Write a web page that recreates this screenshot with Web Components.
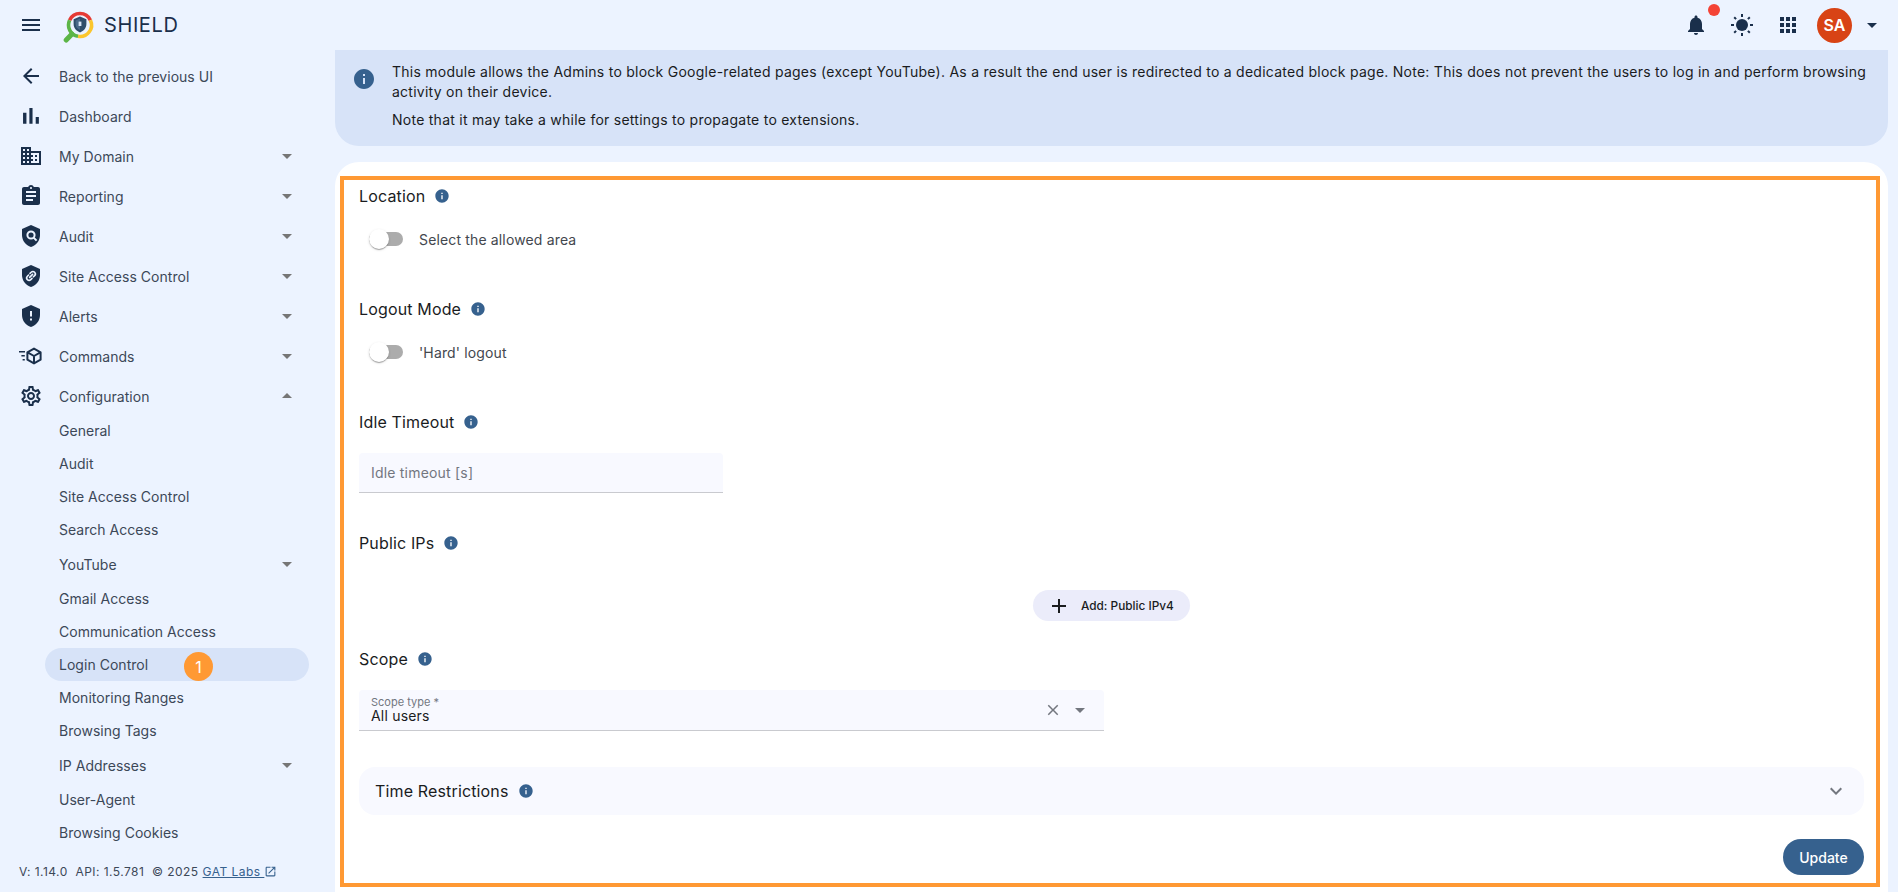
<!DOCTYPE html>
<html lang="en">
<head>
<meta charset="utf-8">
<title>SHIELD</title>
<style>
  html, body { margin: 0; height: 892px; overflow: hidden; background: #ecf3ff; font-family: Inter, "Liberation Sans", sans-serif; }
</style>
</head>
<body>
<app-shell></app-shell>
<script>
const ICONS = {
  menu: '<path d="M3 18h18v-2H3v2zm0-5h18v-2H3v2zm0-7v2h18V6H3z"/>',
  back: '<path d="M20 11H7.83l5.59-5.59L12 4l-8 8 8 8 1.41-1.41L7.83 13H20v-2z"/>',
  bar: '<path d="M5 9.2h3V19H5V9.2zM10.6 5h2.8v14h-2.8V5zm5.6 8H19v6h-2.8v-6z" transform="translate(-1.6 -1.6) scale(1.13)"/>',
  domain: '<path d="M12 7V3H2v18h20V7H12zM6 19H4v-2h2v2zm0-4H4v-2h2v2zm0-4H4V9h2v2zm0-4H4V5h2v2zm4 12H8v-2h2v2zm0-4H8v-2h2v2zm0-4H8V9h2v2zm0-4H8V5h2v2zm10 12h-8v-2h2v-2h-2v-2h2v-2h-2V9h8v10zm-2-8h-2v2h2v-2zm0 4h-2v2h2v-2z"/>',
  report: '<path d="M19 3h-4.18C14.4 1.84 13.3 1 12 1c-1.3 0-2.4.84-2.82 2H5c-1.1 0-2 .9-2 2v14c0 1.1.9 2 2 2h14c1.1 0 2-.9 2-2V5c0-1.1-.9-2-2-2zm-7 0c.55 0 1 .45 1 1s-.45 1-1 1-1-.45-1-1 .45-1 1-1zm2 14H7v-2h7v2zm3-4H7v-2h10v2zm0-4H7V7h10v2z"/>',
  shieldSearch: '<path d="M12 1L3 5v6c0 5.55 3.84 10.74 9 12 5.16-1.26 9-6.45 9-12V5l-9-4z"/><circle cx="12" cy="11" r="3.6" fill="none" stroke="#ecf3ff" stroke-width="2"/><path d="M14.6 13.6l3 3" stroke="#ecf3ff" stroke-width="2"/>',
  shieldLink: '<path d="M12 1L3 5v6c0 5.55 3.84 10.74 9 12 5.16-1.26 9-6.45 9-12V5l-9-4z"/><path d="M10.6 13.4l3-3M11 9.4l1.2-1.2a2.4 2.4 0 0 1 3.4 3.4l-1.2 1.2M13 14.4l-1.2 1.2a2.4 2.4 0 0 1-3.4-3.4l1.2-1.2" fill="none" stroke="#ecf3ff" stroke-width="1.6" stroke-linecap="round"/>',
  shieldAlert: '<path d="M12 1L3 5v6c0 5.55 3.84 10.74 9 12 5.16-1.26 9-6.45 9-12V5l-9-4zm1 15.5h-2v-2h2v2zm0-4h-2V7h2v5.5z"/>',
  commands: '<path d="M0 7h6v1.6H0zM2.4 11h3.4v1.6H2.4zM3.6 15h2.2v1.6H3.6z"/><path d="M15 4.6l6.6 3.7v7.4L15 19.4l-6.6-3.7V8.3zM8.6 8.4L15 12l6.4-3.6M15 12v7.2" fill="none" stroke="currentColor" stroke-width="2" stroke-linejoin="round"/>',
  gear: '<path d="M19.43 12.98c.04-.32.07-.64.07-.98 0-.34-.03-.66-.07-.98l2.11-1.65c.19-.15.24-.42.12-.64l-2-3.46c-.09-.16-.26-.25-.44-.25-.06 0-.12.01-.17.03l-2.49 1c-.52-.4-1.08-.73-1.69-.98l-.38-2.65C14.46 2.18 14.25 2 14 2h-4c-.25 0-.46.18-.49.42l-.38 2.65c-.61.25-1.17.59-1.69.98l-2.49-1c-.06-.02-.12-.03-.18-.03-.17 0-.34.09-.43.25l-2 3.46c-.13.22-.07.49.12.64l2.11 1.65c-.04.32-.07.65-.07.98 0 .33.03.66.07.98l-2.11 1.65c-.19.15-.24.42-.12.64l2 3.46c.09.16.26.25.44.25.06 0 .12-.01.17-.03l2.49-1c.52.4 1.08.73 1.69.98l.38 2.65c.03.24.24.42.49.42h4c.25 0 .46-.18.49-.42l.38-2.65c.61-.25 1.17-.59 1.69-.98l2.49 1c.06.02.12.03.18.03.17 0 .34-.09.43-.25l2-3.46c.12-.22.07-.49-.12-.64l-2.11-1.65zm-1.98-1.71c.04.31.05.52.05.73 0 .21-.02.43-.05.73l-.14 1.13.89.7 1.08.84-.7 1.21-1.27-.51-1.04-.42-.9.68c-.43.32-.84.56-1.25.73l-1.06.43-.16 1.13-.2 1.35h-1.4l-.19-1.35-.16-1.13-1.06-.43c-.43-.18-.83-.41-1.23-.71l-.91-.7-1.06.43-1.27.51-.7-1.21 1.08-.84.89-.7-.14-1.13c-.03-.31-.05-.54-.05-.74s.02-.43.05-.73l.14-1.13-.89-.7-1.08-.84.7-1.21 1.27.51 1.04.42.9-.68c.43-.32.84-.56 1.25-.73l1.06-.43.16-1.13.2-1.35h1.39l.19 1.35.16 1.13 1.06.43c.43.18.83.41 1.23.71l.91.7 1.06-.43 1.27-.51.7 1.21-1.07.85-.89.7.14 1.13zM12 8c-2.21 0-4 1.79-4 4s1.79 4 4 4 4-1.79 4-4-1.79-4-4-4zm0 6c-1.1 0-2-.9-2-2s.9-2 2-2 2 .9 2 2-.9 2-2 2z"/>',
  bell: '<path d="M12 22c1.1 0 2-.9 2-2h-4c0 1.1.89 2 2 2zm6-6v-5c0-3.07-1.64-5.64-4.5-6.32V4c0-.83-.67-1.5-1.5-1.5s-1.5.67-1.5 1.5v.68C7.63 5.36 6 7.92 6 11v5l-2 2v1h16v-1l-2-2z"/>',
  sun: '<circle cx="12" cy="12" r="6"/><path d="M12 1v3M12 20v3M1 12h3M20 12h3M4.2 4.2l1.9 1.9M17.9 17.9l1.9 1.9M4.2 19.8l1.9-1.9M17.9 6.1l1.9-1.9" stroke="currentColor" stroke-width="2"/>',
  apps: '<path d="M4 8h4V4H4v4zm6 12h4v-4h-4v4zm-6 0h4v-4H4v4zm0-6h4v-4H4v4zm6 0h4v-4h-4v4zm6-10v4h4V4h-4zm-6 4h4V4h-4v4zm6 6h4v-4h-4v4zm0 6h4v-4h-4v4z"/>',
  down: '<path d="M7 10l5 5 5-5z"/>',
  up: '<path d="M7 14l5-5 5 5z"/>',
  info: '<path d="M12 2C6.48 2 2 6.48 2 12s4.48 10 10 10 10-4.48 10-10S17.52 2 12 2zm1 15h-2v-6h2v6zm0-8h-2V7h2v2z"/>',
  close: '<path d="M19 6.41L17.59 5 12 10.59 6.41 5 5 6.41 10.59 12 5 17.59 6.41 19 12 13.41 17.59 19 19 17.59 13.41 12z"/>',
  add: '<path d="M19 13h-6v6h-2v-6H5v-2h6V5h2v6h6v2z"/>',
  expand: '<path d="M16.59 8.59L12 13.17 7.41 8.59 6 10l6 6 6-6z"/>',
  external: '<path d="M19 19H5V5h7V3H5c-1.11 0-2 .9-2 2v14c0 1.1.89 2 2 2h14c1.1 0 2-.9 2-2v-7h-2v7zM14 3v2h3.59l-9.83 9.83 1.41 1.41L19 6.41V10h2V3h-7z"/>'
};

class UiIcon extends HTMLElement {
  connectedCallback() {
    const size = this.getAttribute("size") || 24;
    this.attachShadow({ mode: "open" }).innerHTML = `
      <style>
        :host { display: inline-flex; flex: none; width: ${size}px; height: ${size}px; }
        svg { width: 100%; height: 100%; fill: currentColor; display: block; }
      </style>
      <svg viewBox="0 0 24 24">${ICONS[this.getAttribute("name")] || ""}</svg>`;
  }
}

class ShieldLogo extends HTMLElement {
  connectedCallback() {
    this.attachShadow({ mode: "open" }).innerHTML = `
      <style>
        :host { display: block; flex: none; width: 34px; height: 34px; }
        svg { display: block; }
      </style>
      <svg width="34" height="34" viewBox="0 0 34 34" fill="none">
        <path d="M10 25L4.2 31" stroke="#5cb547" stroke-width="5" stroke-linecap="round"/>
        <path d="M7.58 11.14A11.5 11.5 0 0 1 28.42 11.14" stroke="#e53a35" stroke-width="3.6"/>
        <path d="M28.42 11.14A11.5 11.5 0 0 1 16 27.33" stroke="#fbc62d" stroke-width="3.6"/>
        <path d="M16 27.33A11.5 11.5 0 0 1 7.58 11.14" stroke="#5cb547" stroke-width="3.6"/>
        <path d="M18 7.6l-6.4 2.6v4.9c0 3.9 2.7 7.2 6.4 8.3 3.7-1.1 6.4-4.4 6.4-8.3v-4.9z" fill="#2f4d6b"/>
        <path d="M18 9.6l-4.4 1.8v3.7c0 2.8 1.8 5.2 4.4 6z" fill="#4a6a8a"/>
        <rect x="16.6" y="12.6" width="2.8" height="4.4" fill="#d6e3f6"/>
      </svg>`;
  }
}

class AppHeader extends HTMLElement {
  connectedCallback() {
    this.attachShadow({ mode: "open" }).innerHTML = `
      <style>
        :host { display: flex; align-items: center; height: 50px; padding: 0 14px 0 19px; color: #1a2f4b; }
        .logo { margin-left: 19px; margin-top: 2px; }
        .name { margin-left: 8px; font-size: 20px; letter-spacing: .6px; color: #1a2f4b; }
        .right { margin-left: auto; display: flex; align-items: center; }
        .bell { position: relative; display: flex; }
        .dot { position: absolute; left: 24px; top: -9px; width: 12px; height: 12px; border-radius: 50%; background: #f44336; }
        .sun { margin-left: 22px; }
        .apps { margin-left: 22px; }
        .avatar { margin-left: 17px; width: 35px; height: 35px; border-radius: 50%; background: #d84315; color: #fff;
          display: flex; align-items: center; justify-content: center; font-size: 16px; font-weight: 600; }
        .caret { margin-left: 8px; }
      </style>
      <ui-icon name="menu"></ui-icon>
      <shield-logo class="logo"></shield-logo>
      <span class="name">SHIELD</span>
      <div class="right">
        <span class="bell"><ui-icon name="bell"></ui-icon><span class="dot"></span></span>
        <ui-icon class="sun" name="sun"></ui-icon>
        <ui-icon class="apps" name="apps"></ui-icon>
        <span class="avatar">SA</span>
        <ui-icon class="caret" name="down"></ui-icon>
      </div>`;
  }
}

// top level row of the sidebar, icon + label + optional caret
class NavItem extends HTMLElement {
  connectedCallback() {
    const icon = this.getAttribute("icon");
    const caret = this.getAttribute("caret");
    this.attachShadow({ mode: "open" }).innerHTML = `
      <style>
        :host { display: flex; align-items: center; height: 40px; padding-left: 19px; padding-right: 36px;
          color: #3c4858; font-size: 14px; letter-spacing: .03px; }
        .icon { color: #1a2f4b; margin-right: 16px; }
        .label { flex: 1; white-space: nowrap; }
        .caret { color: #767676; }
      </style>
      <ui-icon class="icon" name="${icon}"></ui-icon>
      <span class="label"><slot></slot></span>
      ${caret ? `<ui-icon class="caret" name="${caret}"></ui-icon>` : ""}`;
  }
}

class NavSub extends HTMLElement {
  connectedCallback() {
    const caret = this.hasAttribute("caret");
    this.attachShadow({ mode: "open" }).innerHTML = `
      <style>
        :host { display: flex; align-items: center; height: ${caret ? 36 : 33}px; margin-left: 45px; width: 264px;
          box-sizing: border-box; padding: 0 10px 0 14px; border-radius: 17px; position: relative;
          color: #3c4858; font-size: 14px; letter-spacing: .03px; }
        :host([active]) { background: #d7e3f8; }
        .label { flex: 1; white-space: nowrap; }
        .caret { color: #767676; }
      </style>
      <span class="label"><slot></slot></span>
      ${caret ? `<ui-icon class="caret" name="down"></ui-icon>` : ""}
      <slot name="badge"></slot>`;
  }
}

class StepBadge extends HTMLElement {
  connectedCallback() {
    this.attachShadow({ mode: "open" }).innerHTML = `
      <style>
        :host { position: absolute; left: 139px; top: 4px; width: 29px; height: 29px; border-radius: 50%;
          background: #ff9933; color: #fff; font-size: 16px; display: flex; align-items: center; justify-content: center; }
      </style><slot></slot>`;
  }
}

class SideNav extends HTMLElement {
  connectedCallback() {
    this.attachShadow({ mode: "open" }).innerHTML = `
      <style>
        :host { display: flex; flex-direction: column; width: 335px; height: 842px; box-sizing: border-box; padding-top: 6px; overflow: hidden; }
        .subs { margin-top: -2px; flex: 1; }
        .foot { display: flex; align-items: center; height: 22px; margin-bottom: 10px; padding-left: 19px; font-size: 12px;
          letter-spacing: .46px; color: #3c4858; white-space: pre; }
        a { color: #36618e; text-decoration: underline; margin-left: 4px; }
        ui-icon { color: #36618e; }
      </style>
      <nav-item icon="back">Back to the previous UI</nav-item>
      <nav-item icon="bar">Dashboard</nav-item>
      <nav-item icon="domain" caret="down">My Domain</nav-item>
      <nav-item icon="report" caret="down">Reporting</nav-item>
      <nav-item icon="shieldSearch" caret="down">Audit</nav-item>
      <nav-item icon="shieldLink" caret="down">Site Access Control</nav-item>
      <nav-item icon="shieldAlert" caret="down">Alerts</nav-item>
      <nav-item icon="commands" caret="down">Commands</nav-item>
      <nav-item icon="gear" caret="up">Configuration</nav-item>
      <div class="subs">
        <nav-sub>General</nav-sub>
        <nav-sub>Audit</nav-sub>
        <nav-sub>Site Access Control</nav-sub>
        <nav-sub>Search Access</nav-sub>
        <nav-sub caret>YouTube</nav-sub>
        <nav-sub>Gmail Access</nav-sub>
        <nav-sub>Communication Access</nav-sub>
        <nav-sub active>Login Control<step-badge slot="badge">1</step-badge></nav-sub>
        <nav-sub>Monitoring Ranges</nav-sub>
        <nav-sub>Browsing Tags</nav-sub>
        <nav-sub caret>IP Addresses</nav-sub>
        <nav-sub>User-Agent</nav-sub>
        <nav-sub>Browsing Cookies</nav-sub>
      </div>
      <div class="foot">V: 1.14.0  API: 1.5.781  © 2025<a>GAT Labs </a><ui-icon name="external" size="13"></ui-icon></div>`;
  }
}

class InfoBanner extends HTMLElement {
  connectedCallback() {
    this.attachShadow({ mode: "open" }).innerHTML = `
      <style>
        :host { display: flex; box-sizing: border-box; height: 96px; padding: 12px 10px 0 17px; background: #d7e3f8;
          border-radius: 0 0 24px 24px; color: #1a1c1e; font-size: 14px; line-height: 20px; letter-spacing: .255px; }
        ui-icon { color: #36618e; margin-top: 5px; margin-right: 16px; }
        ::slotted(p) { margin: 0 0 8px; }
      </style>
      <ui-icon name="info"></ui-icon>
      <div><slot></slot></div>`;
  }
}

class FormHeading extends HTMLElement {
  connectedCallback() {
    this.attachShadow({ mode: "open" }).innerHTML = `
      <style>
        :host { display: flex; align-items: center; height: 24px; color: #1a1c1e; font-size: 16px; letter-spacing: .15px; }
        ui-icon { color: #36618e; margin-left: 9px; }
      </style>
      <slot></slot><ui-icon name="info" size="16"></ui-icon>`;
  }
}

class ToggleRow extends HTMLElement {
  connectedCallback() {
    this.attachShadow({ mode: "open" }).innerHTML = `
      <style>
        :host { display: flex; align-items: center; height: 38px; margin-top: 12px; padding-left: 10px; color: #43474e; font-size: 14px; letter-spacing: .15px; }
        .switch { position: relative; width: 34px; height: 14px; border-radius: 7px; background: #acacac; margin-right: 16px; }
        .thumb { position: absolute; left: 0; top: -3px; width: 20px; height: 20px; border-radius: 50%; background: #fff;
          box-shadow: 0 2px 1px -1px rgba(0,0,0,.2), 0 1px 1px 0 rgba(0,0,0,.14), 0 1px 3px 0 rgba(0,0,0,.12); }
      </style>
      <span class="switch"><span class="thumb"></span></span><slot></slot>`;
  }
}

class TextField extends HTMLElement {
  connectedCallback() {
    this.attachShadow({ mode: "open" }).innerHTML = `
      <style>
        :host { display: flex; align-items: center; box-sizing: border-box; width: 364px; height: 40px; padding-left: 12px; margin-top: 19px;
          background: #f8f9ff; border-bottom: 1px solid #c9cacf; border-radius: 4px 4px 0 0; color: #73777f; font-size: 14px; letter-spacing: .2px; }
      </style>
      <slot></slot>`;
  }
}

class SelectField extends HTMLElement {
  connectedCallback() {
    this.attachShadow({ mode: "open" }).innerHTML = `
      <style>
        :host { display: flex; align-items: center; box-sizing: border-box; width: 745px; height: 41px; padding: 0 12px; margin-top: 19px;
          background: #f8f9ff; border-bottom: 1px solid #c9cacf; border-radius: 4px 4px 0 0; }
        .text { flex: 1; }
        .label { color: #73777f; font-size: 11px; line-height: 12px; }
        .value { color: #1a1c1e; font-size: 14px; line-height: 16px; letter-spacing: .2px; }
        ui-icon { color: #73777f; }
        .x { margin-right: 6px; }
      </style>
      <div class="text">
        <div class="label">${this.getAttribute("label")}</div>
        <div class="value"><slot></slot></div>
      </div>
      <ui-icon class="x" name="close" size="18"></ui-icon>
      <ui-icon name="down"></ui-icon>`;
  }
}

class PillButton extends HTMLElement {
  connectedCallback() {
    this.attachShadow({ mode: "open" }).innerHTML = `
      <style>
        :host { display: flex; align-items: center; box-sizing: border-box; width: 157px; height: 31px; padding-left: 14px; border-radius: 16px;
          background: #ebecfa; color: #1a1c1e; font-size: 11.8px; font-weight: 500; }
        ui-icon { margin-right: 10px; }
      </style>
      <ui-icon name="add"></ui-icon><slot></slot>`;
  }
}

class AccordionBar extends HTMLElement {
  connectedCallback() {
    this.attachShadow({ mode: "open" }).innerHTML = `
      <style>
        :host { display: flex; align-items: center; height: 48px; padding: 0 16px; border-radius: 16px; background: #f8f9ff;
          color: #1a1c1e; font-size: 16px; letter-spacing: .15px; }
        .info { color: #36618e; margin-left: 9px; }
        .exp { margin-left: auto; color: #73777f; }
      </style>
      <slot></slot>
      <ui-icon class="info" name="info" size="16"></ui-icon>
      <ui-icon class="exp" name="expand"></ui-icon>`;
  }
}

class SettingsCard extends HTMLElement {
  connectedCallback() {
    this.attachShadow({ mode: "open" }).innerHTML = `
      <style>
        :host { display: block; height: 730px; box-sizing: border-box; margin-top: 16px; padding: 22px 24px 0; background: #fff; border-radius: 24px 24px 0 0; overflow: hidden; }
        .m39 { margin-top: 39px; }
        .m38 { margin-top: 38px; }
        .m26 { margin-top: 26px; }
        .add { margin: 35px 0 0 674px; }
        .acc { margin-top: 36px; }
        .actions { display: flex; justify-content: flex-end; margin-top: 24px; }
        .update { display: flex; align-items: center; justify-content: center; width: 81px; height: 36px; border-radius: 18px;
          background: #36618e; color: #fff; font-size: 14px; font-weight: 500; }
      </style>
      <form-heading>Location</form-heading>
      <toggle-row>Select the allowed area</toggle-row>
      <form-heading class="m39">Logout Mode</form-heading>
      <toggle-row>'Hard' logout</toggle-row>
      <form-heading class="m39">Idle Timeout</form-heading>
      <text-field>Idle timeout [s]</text-field>
      <form-heading class="m38">Public IPs</form-heading>
      <pill-button class="add">Add: Public IPv4</pill-button>
      <form-heading class="m26">Scope</form-heading>
      <select-field label="Scope type *">All users</select-field>
      <accordion-bar class="acc">Time Restrictions</accordion-bar>
      <div class="actions"><span class="update">Update</span></div>`;
  }
}

class AppShell extends HTMLElement {
  connectedCallback() {
    this.attachShadow({ mode: "open" }).innerHTML = `
      <style>
        :host { display: block; position: relative; width: 1898px; height: 892px; overflow: hidden; }
        .body { display: flex; }
        main { width: 1553px; }
        .callout { position: absolute; left: 340px; top: 176px; width: 1540px; height: 711px; box-sizing: border-box;
          border: 4px solid #ff9933; pointer-events: none; }
      </style>
      <app-header></app-header>
      <div class="body">
        <side-nav></side-nav>
        <main>
          <info-banner>
            <p>This module allows the Admins to block Google-related pages (except YouTube). As a result the end user is redirected to a dedicated block page. Note: This does not prevent the users to log in and perform browsing activity on their device.</p>
            <p>Note that it may take a while for settings to propagate to extensions.</p>
          </info-banner>
          <settings-card></settings-card>
        </main>
      </div>
      <div class="callout"></div>`;
  }
}

customElements.define("ui-icon", UiIcon);
customElements.define("shield-logo", ShieldLogo);
customElements.define("app-header", AppHeader);
customElements.define("nav-item", NavItem);
customElements.define("nav-sub", NavSub);
customElements.define("step-badge", StepBadge);
customElements.define("side-nav", SideNav);
customElements.define("info-banner", InfoBanner);
customElements.define("form-heading", FormHeading);
customElements.define("toggle-row", ToggleRow);
customElements.define("text-field", TextField);
customElements.define("select-field", SelectField);
customElements.define("pill-button", PillButton);
customElements.define("accordion-bar", AccordionBar);
customElements.define("settings-card", SettingsCard);
customElements.define("app-shell", AppShell);
</script>
</body>
</html>
